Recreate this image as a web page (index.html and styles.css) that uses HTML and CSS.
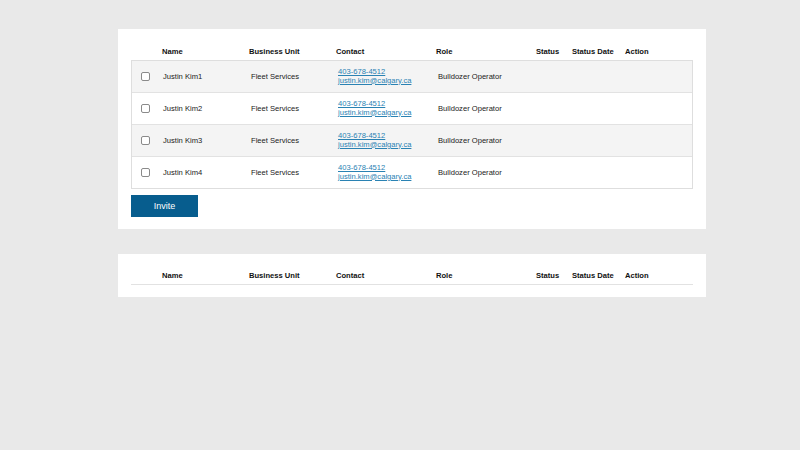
FILE: index.html
```html
<!DOCTYPE html>
<html>
<head>
<meta charset="utf-8">
<link rel="stylesheet" href="styles.css">
</head>
<body>
<div class="page">
  <section class="card">
    <div class="grid head">
      <span></span><span>Name</span><span>Business Unit</span><span>Contact</span><span>Role</span><span>Status</span><span>Status Date</span><span>Action</span>
    </div>
    <div class="table">
      <div class="grid row alt">
        <span class="cb"><span class="box"></span></span><span class="c-name">Justin Kim1</span><span class="c-bu">Fleet Services</span><span class="c-contact"><a href="#">403-678-4512</a><a href="#">justin.kim@calgary.ca</a></span><span class="c-role">Bulldozer Operator</span><span></span><span></span><span></span>
      </div>
      <div class="grid row">
        <span class="cb"><span class="box"></span></span><span class="c-name">Justin Kim2</span><span class="c-bu">Fleet Services</span><span class="c-contact"><a href="#">403-678-4512</a><a href="#">justin.kim@calgary.ca</a></span><span class="c-role">Bulldozer Operator</span><span></span><span></span><span></span>
      </div>
      <div class="grid row alt">
        <span class="cb"><span class="box"></span></span><span class="c-name">Justin Kim3</span><span class="c-bu">Fleet Services</span><span class="c-contact"><a href="#">403-678-4512</a><a href="#">justin.kim@calgary.ca</a></span><span class="c-role">Bulldozer Operator</span><span></span><span></span><span></span>
      </div>
      <div class="grid row">
        <span class="cb"><span class="box"></span></span><span class="c-name">Justin Kim4</span><span class="c-bu">Fleet Services</span><span class="c-contact"><a href="#">403-678-4512</a><a href="#">justin.kim@calgary.ca</a></span><span class="c-role">Bulldozer Operator</span><span></span><span></span><span></span>
      </div>
    </div>
    <button class="invite">Invite</button>
  </section>
  <section class="card card2">
    <div class="grid head head-line">
      <span></span><span>Name</span><span>Business Unit</span><span>Contact</span><span>Role</span><span>Status</span><span>Status Date</span><span>Action</span>
    </div>
  </section>
</div>
</body>
</html>
```
FILE: styles.css
```css
html, body {
  margin: 0;
  padding: 0;
  background: #e9e9e9;
  font-family: "Liberation Sans", Arial, sans-serif;
  color: #222;
}
.page {
  padding: 29px 0 0 118px;
  width: 588px;
}
.card {
  background: #fff;
  padding: 13px 13px 12px;
  margin-bottom: 25px;
}
.card2 {
  padding-bottom: 12px;
}
.grid {
  display: grid;
  grid-template-columns: 31px 87px 87px 100px 100px 36px 53px 1fr;
  align-items: center;
}
.head {
  height: 18px;
  font-size: 7.6px;
  font-weight: bold;
  color: #111;
}
.head-line {
  height: 17px;
  border-bottom: 1px solid #e2e2e2;
}
.table {
  border: 1px solid #dedede;
}
.row {
  height: 31px;
  font-size: 7.6px;
  border-top: 1px solid #e2e2e2;
}
.row:first-child {
  border-top: none;
}
.alt {
  background: #f4f4f4;
}
.cb {
  display: flex;
  padding-left: 9px;
}
.box {
  width: 7px;
  height: 7px;
  border: 1px solid #8a8a8a;
  border-radius: 2px;
  background: #fff;
}
.c-bu, .c-contact, .c-role {
  padding-left: 1px;
}
.c-contact {
  display: flex;
  flex-direction: column;
  line-height: 8.6px;
}
.c-contact a {
  color: #2a82b3;
  text-decoration: underline;
}
.invite {
  display: block;
  margin-top: 6px;
  width: 67px;
  height: 22px;
  border: none;
  background: #075d8e;
  color: #fff;
  font-family: "Liberation Sans", Arial, sans-serif;
  font-size: 9px;
  padding: 0;
}
```
